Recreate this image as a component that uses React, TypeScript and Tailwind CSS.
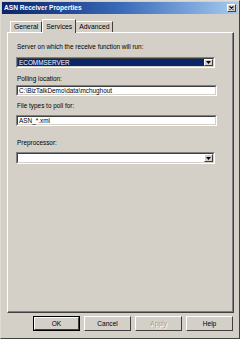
import * as React from "react";

const FONT = { fontFamily: '"Liberation Sans", Arial, sans-serif' };

function Sunken({ children, className = "" }: { children?: React.ReactNode; className?: string }) {
  // classic win32 sunken edge: dark top/left, light bottom/right
  return (
    <div className={"border border-t-[#808080] border-l-[#808080] border-b-white border-r-white " + className}>
      <div className="h-full border border-t-[#404040] border-l-[#404040] border-b-[#d4d0c8] border-r-[#d4d0c8] bg-white flex items-center">
        {children}
      </div>
    </div>
  );
}

function DropArrow() {
  return (
    <div className="w-[9px] h-full shrink-0 bg-[#d4d0c8] border border-t-white border-l-white border-b-[#404040] border-r-[#404040] flex items-center justify-center">
      <svg width="5" height="3" viewBox="0 0 5 3">
        <path d="M0 0h5L2.5 3z" fill="#000" />
      </svg>
    </div>
  );
}

function Label({ text, className = "" }: { text: string; className?: string }) {
  return <span className={"block text-[6.4px] leading-[8px] text-black pl-[1px] " + className}>{text}</span>;
}

function Button({ label, isDefault, disabled }: { label: string; isDefault?: boolean; disabled?: boolean }) {
  return (
    <div className={"w-[47px] h-[15px] " + (isDefault ? "border border-black" : "")}>
      <div className="h-full border border-t-white border-l-white border-b-[#404040] border-r-[#404040] bg-[#d4d0c8] flex items-center justify-center">
        <span
          className={"text-[6.6px] leading-[8px] " + (disabled ? "text-[#a09c96] [text-shadow:1px_1px_0_#fff]" : "text-black")}
        >
          {label}
        </span>
      </div>
    </div>
  );
}

export default function App() {
  return (
    <div
      className="w-[240px] h-[339px] bg-[#d4d0c8] border border-t-[#dedad4] border-l-[#dedad4] border-b-[#404040] border-r-[#404040] flex flex-col overflow-hidden"
      style={FONT}
    >
      {/* Title bar */}
      <div className="h-[12px] mx-[1px] mt-[1px] bg-gradient-to-r from-[#0a246a] via-[#3a6ab8] to-[#a6caf0] flex items-center justify-between pl-[2px] pr-[2px]">
        <span className="text-[6.6px] leading-[8px] font-bold text-white">ASN Receiver Properties</span>
        <div className="w-[9px] h-[8px] bg-[#d4d0c8] border border-t-white border-l-white border-b-[#404040] border-r-[#404040] flex items-center justify-center">
          <svg width="5" height="4" viewBox="0 0 5 4">
            <path d="M0.5 0.5L4.5 3.5M4.5 0.5L0.5 3.5" stroke="#000" strokeWidth="1.1" />
          </svg>
        </div>
      </div>

      <div className="flex-1 flex flex-col pl-[6px] pr-[5px] pt-[5px]">
        {/* Tabs */}
        <div className="h-[13px] flex items-end pl-[3px] relative z-10">
          <div className="h-[11px] px-[3px] border-t border-l border-r border-t-white border-l-white border-r-[#404040] flex items-center">
            <span className="text-[6.8px] leading-[8px] text-black">General</span>
          </div>
          <div className="h-[14px] -mb-[1px] px-[3px] bg-[#d4d0c8] border-t border-l border-r border-t-white border-l-white border-r-[#404040] flex items-center">
            <span className="text-[6.8px] leading-[8px] text-black">Services</span>
          </div>
          <div className="h-[11px] px-[3px] border-t border-r border-t-white border-r-[#404040] flex items-center">
            <span className="text-[6.8px] leading-[8px] text-black">Advanced</span>
          </div>
        </div>

        {/* Tab panel */}
        <div className="h-[281px] border border-t-white border-l-white border-b-[#404040] border-r-[#404040]">
          <div className="h-full border-r border-b border-r-[#808080] border-b-[#808080] pl-[8px] pr-[17px] pt-[10px] flex flex-col">
            <Label text="Server on which the receive function will run:" className="mb-[6px]" />
            <Sunken className="h-[11px]">
              <div className="flex-1 h-full bg-[#0a246a] flex items-center pl-[1px]">
                <span className="text-[6.4px] leading-[8px] text-white">ECOMMSERVER</span>
              </div>
              <DropArrow />
            </Sunken>

            <Label text="Polling location:" className="mt-[7px] mb-[2px]" />
            <Sunken className="h-[11px] mr-[-2px]">
              <span className="text-[6.4px] leading-[8px] text-black pl-[1px]">C:\BizTalkDemo\data\mchughout</span>
            </Sunken>

            <Label text="File types to poll for:" className="mt-[6px] mb-[5px]" />
            <Sunken className="h-[11px] mr-[-2px]">
              <span className="text-[6.4px] leading-[8px] text-black pl-[1px]">ASN_*.xml</span>
            </Sunken>

            <Label text="Preprocessor:" className="mt-[13px] mb-[5px]" />
            <Sunken className="h-[12px]">
              <div className="flex-1" />
              <DropArrow />
            </Sunken>
          </div>
        </div>

        {/* Buttons */}
        <div className="mt-[3px] flex justify-end gap-[4px] pr-[1px]">
          <Button label="OK" isDefault />
          <Button label="Cancel" />
          <Button label="Apply" disabled />
          <Button label="Help" />
        </div>
      </div>
    </div>
  );
}
